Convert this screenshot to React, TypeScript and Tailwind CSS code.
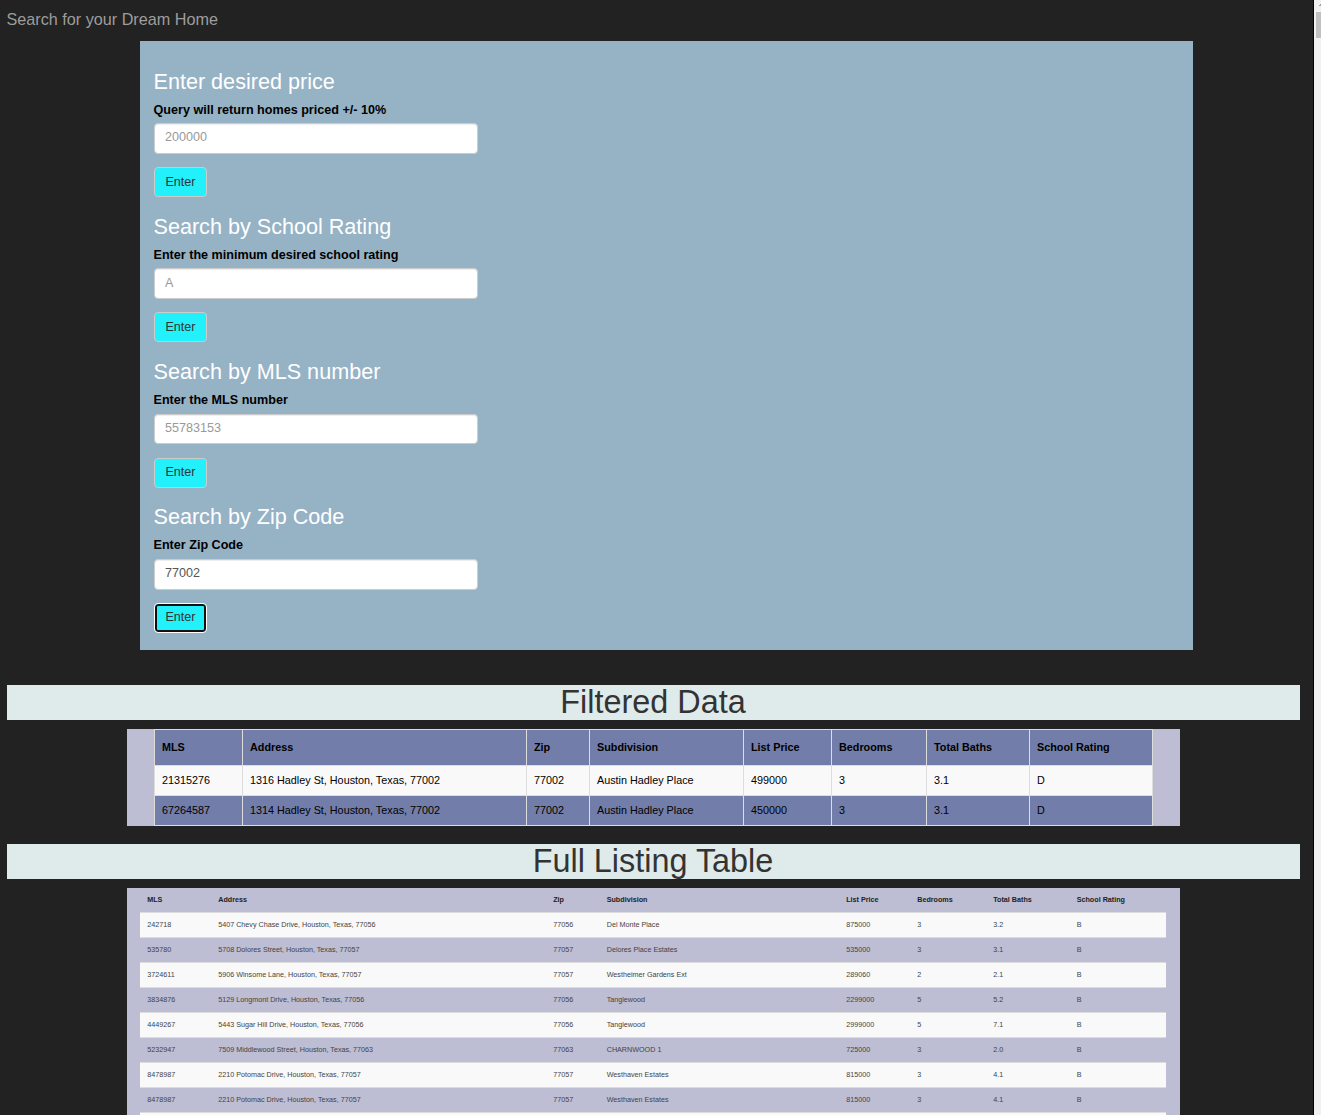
import React from "react";

const searches = [
  { title: "Enter desired price", label: "Query will return homes priced +/- 10%", placeholder: "200000", value: "" },
  { title: "Search by School Rating", label: "Enter the minimum desired school rating", placeholder: "A", value: "" },
  { title: "Search by MLS number", label: "Enter the MLS number", placeholder: "55783153", value: "" },
  { title: "Search by Zip Code", label: "Enter Zip Code", placeholder: "", value: "77002" },
];

const columns = ["MLS", "Address", "Zip", "Subdivision", "List Price", "Bedrooms", "Total Baths", "School Rating"];

const filtered = [
  ["21315276", "1316 Hadley St, Houston, Texas, 77002", "77002", "Austin Hadley Place", "499000", "3", "3.1", "D"],
  ["67264587", "1314 Hadley St, Houston, Texas, 77002", "77002", "Austin Hadley Place", "450000", "3", "3.1", "D"],
];

const listings = [
  ["242718", "5407 Chevy Chase Drive, Houston, Texas, 77056", "77056", "Del Monte Place", "875000", "3", "3.2", "B"],
  ["535780", "5708 Dolores Street, Houston, Texas, 77057", "77057", "Delores Place Estates", "535000", "3", "3.1", "B"],
  ["3724611", "5906 Winsome Lane, Houston, Texas, 77057", "77057", "Westheimer Gardens Ext", "289060", "2", "2.1", "B"],
  ["3834876", "5129 Longmont Drive, Houston, Texas, 77056", "77056", "Tanglewood", "2299000", "5", "5.2", "B"],
  ["4449267", "5443 Sugar Hill Drive, Houston, Texas, 77056", "77056", "Tanglewood", "2999000", "5", "7.1", "B"],
  ["5232947", "7509 Middlewood Street, Houston, Texas, 77063", "77063", "CHARNWOOD 1", "725000", "3", "2.0", "B"],
  ["8478987", "2210 Potomac Drive, Houston, Texas, 77057", "77057", "Westhaven Estates", "815000", "3", "4.1", "B"],
  ["8478987", "2210 Potomac Drive, Houston, Texas, 77057", "77057", "Westhaven Estates", "815000", "3", "4.1", "B"],
];

const filteredGrid = "grid grid-cols-[88px_284px_63px_154px_88px_95px_103px_123px]";
const listingGrid = "grid grid-cols-[71px_335px_53.5px_239.5px_71px_76px_83.5px_96.5px] pl-[7.2px] text-[7.2px]";

function SearchForm({ title, label, placeholder, value, focused }: (typeof searches)[number] & { focused: boolean }) {
  return (
    <section className="h-[145.3px]">
      <h3 className="h-6 text-[21.6px] leading-6 text-white">{title}</h3>
      <label className="mt-[7px] block h-[18px] text-[12.6px] leading-[18px] font-bold text-black">{label}</label>
      <input
        className="mt-[4.4px] ml-[0.5px] block h-[30.7px] w-[324px] rounded-[4px] border border-[#ccc] bg-white px-[10px] pb-[2px] text-[12.6px] text-[#555] shadow-[inset_0_1px_1px_rgba(0,0,0,0.075)] placeholder:text-[#999]"
        placeholder={placeholder}
        defaultValue={value}
      />
      <button
        className={
          focused
            ? "mt-[13.3px] ml-[0.5px] block h-[30px] w-[53px] rounded-[4px] border border-white bg-[#22f0fa] text-[12.6px] text-[#333] shadow-[inset_0_0_0_2px_#101010]"
            : "mt-[13.3px] ml-[0.5px] block h-[30px] w-[53px] rounded-[4px] border border-[#ccc] bg-[#22f0fa] text-[12.6px] text-[#333]"
        }
      >
        Enter
      </button>
    </section>
  );
}

function Banner({ children }: { children: React.ReactNode }) {
  return (
    <h1 className="ml-[7px] h-[35px] w-[1293px] bg-[#dfebeb] pr-px text-center text-[32.4px] leading-[35px] text-[#333]">
      {children}
    </h1>
  );
}

function FilteredTable() {
  return (
    <div className="mt-[9px] ml-[127px] h-[97px] w-[1053px] bg-[#bdbdd3] pl-[27px] text-[10.8px] text-black">
      <div className="w-[999px] border-t border-l border-[#ddd]">
        <div className={filteredGrid}>
          {columns.map((c) => (
            <div key={c} className="h-9 border-r border-b border-[#ddd] bg-[#727da9] pl-[7px] leading-[35px] font-bold">
              {c}
            </div>
          ))}
        </div>
        {filtered.map((row, i) => (
          <div key={row[0]} className={filteredGrid}>
            {row.map((v, j) => (
              <div
                key={j}
                className={
                  i % 2 === 0
                    ? "h-[30px] border-r border-b border-[#ddd] bg-[#f9f9f9] pl-[7px] leading-[29px]"
                    : "h-[30px] border-r border-b border-[#ddd] bg-[#727da9] pl-[7px] leading-[29px]"
                }
              >
                {v}
              </div>
            ))}
          </div>
        ))}
      </div>
    </div>
  );
}

function ListingTable() {
  return (
    <div className="mt-[9px] ml-[127px] h-[260px] w-[1053px] overflow-hidden bg-[#bdbdd3] pl-[13px]">
      <div className="w-[1026px] text-[#333]">
        <div className={listingGrid}>
          {columns.map((c) => (
            <div key={c} className="h-6 leading-[23px] font-bold text-[#222]">{c}</div>
          ))}
        </div>
        {listings.map((row, i) => (
          <div key={i} className={i % 2 === 0 ? "border-t border-[#ddd] bg-[#f9f9f9]" : "border-t border-[#ddd]"}>
            <div className={listingGrid}>
              {row.map((v, j) => (
                <div key={j} className="h-6 leading-6 text-[#444]">{v}</div>
              ))}
            </div>
          </div>
        ))}
        <div className="h-6 border-t border-[#ddd] bg-[#f9f9f9]" />
      </div>
    </div>
  );
}

export default function App() {
  return (
    <div className="flex h-[1115px] w-[1321px] overflow-hidden bg-[#222] font-['Liberation_Sans',Arial,sans-serif]">
      <main className="h-full w-[1313px] shrink-0 overflow-hidden">
        <header className="h-[41px] pl-[6.5px] text-[16.2px] leading-[39px] text-[#9d9d9d]">Search for your Dream Home</header>
        <div className="ml-[140px] h-[609px] w-[1053px] overflow-hidden bg-[#96b2c5] pt-[28.6px] pl-[13.5px]">
          {searches.map((s, i) => (
            <SearchForm key={s.title} {...s} focused={i === 3} />
          ))}
        </div>
        <div className="h-[35px]" />
        <Banner>Filtered Data</Banner>
        <FilteredTable />
        <div className="h-[18px]" />
        <Banner>Full Listing Table</Banner>
        <ListingTable />
      </main>
      <div className="flex w-2 flex-col items-end border-l border-black bg-[#f1f1f1]">
        <svg className="h-3 w-[2px] shrink-0" viewBox="0 0 2 12" shapeRendering="crispEdges">
          <path d="M1 4h1v2H0V5h1z" fill="#a3a3a3" />
        </svg>
        <div className="h-[26px] w-[5px] bg-[#c1c1c1]" />
      </div>
    </div>
  );
}
